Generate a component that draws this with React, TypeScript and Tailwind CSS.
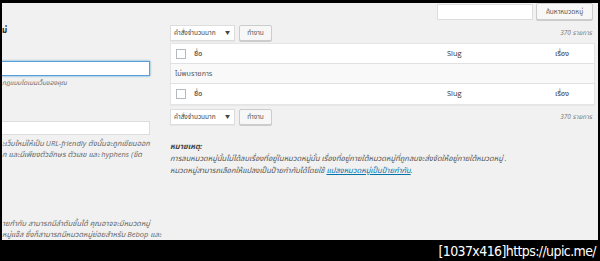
const thai = { fontFamily: '"Open Sans", "Noto Sans", "Noto Sans Thai", "Noto Sans CJK SC", sans-serif' };

function BulkRow({ top }: { top: boolean }) {
  return (
    <div className={`flex items-center justify-between ${top ? "mt-[5px]" : "mt-[4px]"}`}>
      <div className="flex items-center gap-[4px]">
        <div className="flex h-[16px] w-[65px] items-center justify-between border border-[#ddd] bg-white pl-[3px] pr-[4px] text-[6.5px] text-[#444] shadow-[0_1px_1px_rgba(0,0,0,0.04)]">
          <span>คำสั่งจำนวนมาก</span>
          <span className="text-[5px]">▼</span>
        </div>
        <button className="flex h-[16px] w-[33px] items-center justify-center rounded-[2px] border border-[#ccc] bg-[#f7f7f7] text-[6.5px] text-[#555] shadow-[0_1px_0_#ccc]">
          ทำงาน
        </button>
      </div>
      <span className="pr-[3px] text-[6.5px] italic text-[#777]">370 รายการ</span>
    </div>
  );
}

function HeadRow({ last }: { last?: boolean }) {
  return (
    <div className={`flex h-[20px] items-center text-[7.5px] text-[#333] ${last ? "" : "border-b border-[#e1e1e1]"}`}>
      <div className="ml-[5px] h-[10px] w-[10px] border border-[#b4b9be] bg-white" />
      <span className="ml-[8px] w-[253px]">ชื่อ</span>
      <span className="w-[108px]">Slug</span>
      <span>เรื่อง</span>
    </div>
  );
}

export default function App() {
  return (
    <div className="flex h-[261px] w-[600px] flex-col bg-black" style={thai}>
      <div className="mx-[2px] mt-[3px] flex h-[237px] overflow-hidden bg-[#f1f1f1] text-[#444]">
        {/* left form, cut off by the frame */}
        <div className="flex w-[160px] shrink-0 flex-col overflow-hidden whitespace-nowrap">
          <div className="mt-[22px] h-[10px] text-[8px] font-bold leading-[10px] text-[#23282d]">ม่</div>
          <div className="mt-[26px] h-[16px] w-[148px] border border-l-0 border-[#5b9dd9] bg-white shadow-[0_0_2px_rgba(30,140,190,0.8)]" />
          <div className="mt-[2px] text-[6.5px] italic leading-[9px] text-[#666]">กฎแบบโดเมนเว็บของคุณ</div>
          <div className="mt-[34px] h-[14px] w-[148px] border border-l-0 border-[#ddd] bg-white" />
          <div className="mt-[3px] text-[7.5px] italic leading-[11px] text-[#666]">
            <div>ะเว็บใหม่ให้เป็น URL-friendly ดังนั้นจะถูกเขียนออก</div>
            <div>ก และมีเพียงตัวอักษร ตัวเลข และ hyphens (ขีด</div>
          </div>
          <div className="mt-[58px] text-[7.5px] italic leading-[11px] text-[#666]">
            <div>ายกำกับ สามารถมีลำดับชั้นได้ คุณอาจจะมีหมวดหมู่</div>
            <div>หมู่แจ๊ส ซึ่งก็สามารถมีหมวดหมู่ย่อยสำหรับ Bebop และ</div>
          </div>
        </div>

        {/* right list */}
        <div className="ml-[8px] flex w-[425px] shrink-0 flex-col">
          <div className="flex justify-end gap-[3px] pr-[2px]">
            <div className="mt-[1px] h-[16px] w-[96px] border border-[#ddd] bg-white" />
            <button className="flex h-[17px] w-[57px] items-center justify-center rounded-[2px] border border-[#ccc] bg-[#f7f7f7] text-[6.5px] text-[#555] shadow-[0_1px_0_#ccc]">
              ค้นหาหมวดหมู่
            </button>
          </div>
          <BulkRow top />
          <div className="mt-[2px] border border-[#e5e5e5] bg-white shadow-[0_1px_1px_rgba(0,0,0,0.04)]">
            <HeadRow />
            <div className="flex h-[20px] items-center border-b border-[#e1e1e1] bg-[#f9f9f9] pl-[4px] text-[7.2px] text-[#555]">
              ไม่พบรายการ
            </div>
            <HeadRow last />
          </div>
          <BulkRow top={false} />
          <div className="mt-[15px] text-[7.6px] leading-[12px] text-[#555]">
            <div className="font-bold italic text-[#444]">หมายเหตุ:</div>
            <div className="italic whitespace-nowrap">
              การลบหมวดหมู่นั้นไม่ได้ลบเรื่องที่อยู่ในหมวดหมู่นั้น เรื่องที่อยู่ภายใต้หมวดหมู่ที่ถูกลบจะส่งจัดให้อยู่ภายใต้หมวดหมู่ .
            </div>
            <div className="italic whitespace-nowrap">
              หมวดหมู่สามารถเลือกให้แปลงเป็นป้ายกำกับได้โดยใช้{" "}
              <a className="text-[#0073aa] underline">แปลงหมวดหมู่เป็นป้ายกำกับ</a>.
            </div>
          </div>
        </div>
      </div>
      <div className="flex flex-1 items-center justify-end pr-[4px] pt-[1px]">
        <span className="text-[14px] leading-none tracking-[-0.6px] text-white" style={{ fontFamily: '"Liberation Sans Narrow", "DejaVu Sans Condensed", "Liberation Sans", sans-serif' }}>
          [1037x416]https://upic.me/
        </span>
      </div>
    </div>
  );
}
